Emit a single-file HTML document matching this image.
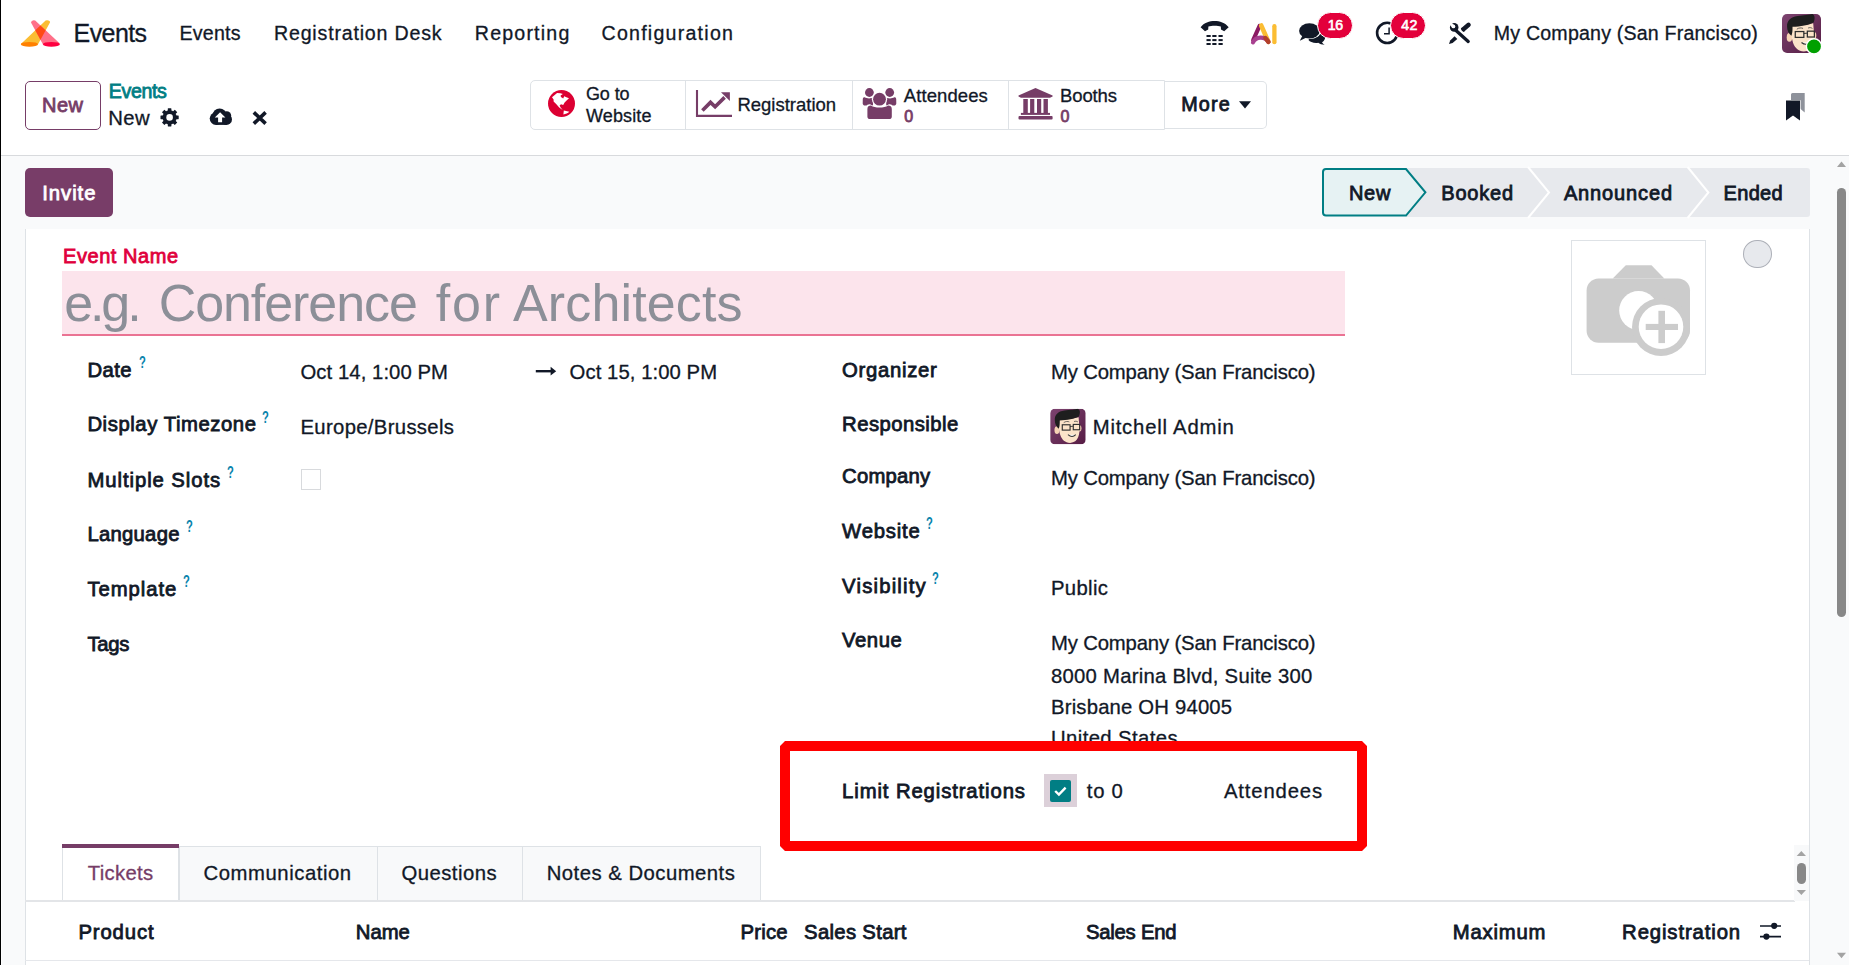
<!DOCTYPE html>
<html><head><meta charset="utf-8"><style>
html,body{margin:0;padding:0;}
body{width:1849px;height:965px;overflow:hidden;position:relative;background:#fff;font-family:"Liberation Sans",sans-serif;color:#111827;}
.t{position:absolute;white-space:nowrap;line-height:1;}
.b{position:absolute;}
svg{position:absolute;overflow:visible;}
</style></head><body>
<div class="b" style="left:0px;top:155px;width:1849px;height:810px;background:#f9fafb;"></div>
<div class="b" style="left:0px;top:155px;width:1849px;height:1px;background:#d8dadd;"></div>
<div class="b" style="left:25px;top:229px;width:1785px;height:736px;background:#fff;border-left:1px solid #dee2e6;border-right:1px solid #dee2e6;box-sizing:border-box;"></div>
<div class="b" style="left:0px;top:0px;width:1px;height:965px;background:#000;"></div>
<div class="b" style="left:1px;top:156px;width:1px;height:809px;background:#fff;"></div>
<svg style="left:0;top:0" width="1849" height="965" viewBox="0 0 1849 965"><path d="M1313,30 C1320,30 1326,34 1325,38.5 C1324.5,40.5 1323,41.8 1322,42.3 C1322.6,43.3 1323.5,44.2 1324.6,44.8 C1322,44.8 1319.6,43.8 1318.2,42.8 C1314,43.5 1310,42 1308.5,40 Z" fill="#111827"/>
<ellipse cx="1309.6" cy="31" rx="11.4" ry="8" fill="#fff"/>
<ellipse cx="1309.4" cy="30.9" rx="10.3" ry="7.7" fill="#111827"/>
<path d="M1302.5,35.5 L1299.8,40.8 L1306.5,37.5 Z" fill="#111827"/>
<circle cx="1387.2" cy="32.9" r="10.1" fill="none" stroke="#111827" stroke-width="2.6"/>
<path d="M1389.1,27.4 L1389.1,33.7 L1384,33.7" fill="none" stroke="#111827" stroke-width="1.5"/>
<path d="M1406,168 L1807,168 Q1810,168 1810,171 L1810,214 Q1810,217 1807,217 L1406,217 Z" fill="#e7e9ed"/>
<path d="M1528,167 L1549,192.5 L1528,218" fill="none" stroke="#fff" stroke-width="2"/>
<path d="M1687.6,167 L1708.4,192.5 L1687.6,218" fill="none" stroke="#fff" stroke-width="2"/>
<path d="M1326,169 L1406,169 L1425.4,192.3 L1406,215.6 L1326,215.6 Q1323,215.6 1323,212.6 L1323,172 Q1323,169 1326,169 Z" fill="#e6f2f3" stroke="#017e84" stroke-width="2" stroke-linejoin="miter"/>
<g fill="#cccccc">
<path d="M1625.8,265.3 L1651.5,265.3 L1664.3,278.4 L1612.7,278.4 Z"/>
<rect x="1586.6" y="278.4" width="103.4" height="64.3" rx="12"/></g>
<circle cx="1638.6" cy="310.5" r="19.4" fill="#fff"/>
<circle cx="1661" cy="327" r="29" fill="#cccccc"/>
<circle cx="1661" cy="326.7" r="22.3" fill="#fff"/>
<rect x="1645.7" y="323.9" width="32.3" height="6.1" fill="#cccccc"/>
<rect x="1658.4" y="310.8" width="6.6" height="32.3" fill="#cccccc"/></svg>
<div class="t" style="left:73.60px;top:20.84px;font-size:25px;-webkit-text-stroke:0.3px currentColor;letter-spacing:-0.595px;">Events</div>
<div class="t" style="left:179.50px;top:23.91px;font-size:19.6px;-webkit-text-stroke:0.3px currentColor;letter-spacing:0.224px;">Events</div>
<div class="t" style="left:274.00px;top:23.91px;font-size:19.6px;-webkit-text-stroke:0.3px currentColor;letter-spacing:0.810px;">Registration Desk</div>
<div class="t" style="left:474.80px;top:23.91px;font-size:19.6px;-webkit-text-stroke:0.3px currentColor;letter-spacing:1.192px;">Reporting</div>
<div class="t" style="left:601.50px;top:23.91px;font-size:19.6px;-webkit-text-stroke:0.3px currentColor;letter-spacing:1.240px;">Configuration</div>
<div class="t" style="left:1493.80px;top:23.71px;font-size:19.6px;-webkit-text-stroke:0.3px currentColor;letter-spacing:0.192px;">My Company (San Francisco)</div>
<div class="b" style="left:1316.6px;top:12.3px;width:36.40000000000009px;height:27.099999999999998px;background:#e3003b;border-radius:14px;border:1px solid #fff;box-sizing:border-box;"></div>
<div class="t" style="left:1327.70px;top:17.98px;font-size:14.2px;-webkit-text-stroke:0.6px currentColor;color:#fff;letter-spacing:-0.362px;">16</div>
<div class="b" style="left:1390.3px;top:12.3px;width:35.700000000000045px;height:27.099999999999998px;background:#e3003b;border-radius:14px;border:1px solid #fff;box-sizing:border-box;"></div>
<div class="t" style="left:1401.30px;top:17.98px;font-size:14.2px;-webkit-text-stroke:0.6px currentColor;color:#fff;letter-spacing:0.238px;">42</div>
<div class="b" style="left:25px;top:81px;width:76px;height:49px;border:1px solid #763d67;border-radius:5px;box-sizing:border-box;"></div>
<div class="t" style="left:41.90px;top:94.57px;font-size:20px;-webkit-text-stroke:0.8px currentColor;color:#763d67;letter-spacing:0.550px;">New</div>
<div class="t" style="left:108.70px;top:82.11px;font-size:19.6px;-webkit-text-stroke:0.8px currentColor;color:#017e84;letter-spacing:-0.336px;">Events</div>
<div class="t" style="left:108.30px;top:107.52px;font-size:20.3px;-webkit-text-stroke:0.3px currentColor;letter-spacing:0.349px;">New</div>
<div class="b" style="left:529.6px;top:80px;width:635.8000000000001px;height:50px;border:1px solid #dee2e6;border-radius:5px 0 0 5px;box-sizing:border-box;"></div>
<div class="b" style="left:1165px;top:81px;width:102px;height:47.80000000000001px;border:1px solid #dee2e6;border-left:none;border-radius:0 5px 5px 0;box-sizing:border-box;"></div>
<div class="b" style="left:685px;top:80px;width:1px;height:50px;background:#dee2e6;"></div>
<div class="b" style="left:852px;top:80px;width:1px;height:50px;background:#dee2e6;"></div>
<div class="b" style="left:1008px;top:80px;width:1px;height:50px;background:#dee2e6;"></div>
<div class="t" style="left:586.00px;top:84.56px;font-size:18px;-webkit-text-stroke:0.3px currentColor;letter-spacing:-0.127px;">Go to</div>
<div class="t" style="left:586.00px;top:107.16px;font-size:18px;-webkit-text-stroke:0.3px currentColor;letter-spacing:0.132px;">Website</div>
<div class="t" style="left:737.40px;top:96.14px;font-size:18.5px;-webkit-text-stroke:0.3px currentColor;">Registration</div>
<div class="t" style="left:903.80px;top:87.04px;font-size:18.5px;-webkit-text-stroke:0.3px currentColor;letter-spacing:0.082px;">Attendees</div>
<div class="t" style="left:904.20px;top:108.76px;font-size:16px;-webkit-text-stroke:0.8px currentColor;color:#763d67;">0</div>
<div class="t" style="left:1060.00px;top:87.04px;font-size:18.5px;-webkit-text-stroke:0.3px currentColor;letter-spacing:-0.125px;">Booths</div>
<div class="t" style="left:1060.40px;top:108.76px;font-size:16px;-webkit-text-stroke:0.8px currentColor;color:#763d67;">0</div>
<div class="t" style="left:1181.20px;top:94.94px;font-size:19.8px;-webkit-text-stroke:0.8px currentColor;letter-spacing:1.185px;">More</div>
<div class="b" style="left:25px;top:168px;width:88px;height:49px;background:#783d68;border-radius:5px;"></div>
<div class="t" style="left:42.30px;top:182.82px;font-size:20.3px;-webkit-text-stroke:0.8px currentColor;color:#fff;letter-spacing:0.937px;">Invite</div>
<div class="t" style="left:1348.90px;top:183.27px;font-size:20px;-webkit-text-stroke:0.8px currentColor;letter-spacing:0.750px;">New</div>
<div class="t" style="left:1441.30px;top:183.27px;font-size:20px;-webkit-text-stroke:0.8px currentColor;letter-spacing:0.800px;">Booked</div>
<div class="t" style="left:1563.90px;top:183.27px;font-size:20px;-webkit-text-stroke:0.8px currentColor;letter-spacing:0.875px;">Announced</div>
<div class="t" style="left:1723.60px;top:183.27px;font-size:20px;-webkit-text-stroke:0.8px currentColor;letter-spacing:0.300px;">Ended</div>
<div class="t" style="left:63.10px;top:245.77px;font-size:20px;-webkit-text-stroke:0.8px currentColor;color:#e0003c;letter-spacing:0.544px;">Event Name</div>
<div class="b" style="left:62px;top:271px;width:1283px;height:65px;background:#fce4ec;border-bottom:2px solid #ea7393;box-sizing:border-box;"></div>
<div class="t" style="left:64.30px;top:276.98px;font-size:52px;color:#8c8f98;letter-spacing:-3.147px;">e.g.</div>
<div class="t" style="left:158.70px;top:276.98px;font-size:52px;color:#8c8f98;letter-spacing:-1.071px;">Conference</div>
<div class="t" style="left:435.70px;top:276.98px;font-size:52px;color:#8c8f98;letter-spacing:1.860px;">for</div>
<div class="t" style="left:513.00px;top:276.98px;font-size:52px;color:#8c8f98;letter-spacing:0.147px;">Architects</div>
<div class="t" style="left:87.40px;top:360.02px;font-size:20.3px;-webkit-text-stroke:0.8px currentColor;letter-spacing:0.456px;">Date</div>
<div class="t" style="left:87.40px;top:414.42px;font-size:20.3px;-webkit-text-stroke:0.8px currentColor;letter-spacing:0.569px;">Display Timezone</div>
<div class="t" style="left:87.40px;top:469.62px;font-size:20.3px;-webkit-text-stroke:0.8px currentColor;letter-spacing:0.940px;">Multiple Slots</div>
<div class="t" style="left:87.40px;top:523.82px;font-size:20.3px;-webkit-text-stroke:0.8px currentColor;letter-spacing:0.266px;">Language</div>
<div class="t" style="left:87.40px;top:578.82px;font-size:20.3px;-webkit-text-stroke:0.8px currentColor;letter-spacing:0.955px;">Template</div>
<div class="t" style="left:87.40px;top:633.82px;font-size:20.3px;-webkit-text-stroke:0.8px currentColor;letter-spacing:-0.244px;">Tags</div>
<div class="t" style="left:300.50px;top:361.62px;font-size:20.3px;-webkit-text-stroke:0.3px currentColor;letter-spacing:0.067px;">Oct 14, 1:00 PM</div>
<div class="t" style="left:569.60px;top:361.62px;font-size:20.3px;-webkit-text-stroke:0.3px currentColor;letter-spacing:0.067px;">Oct 15, 1:00 PM</div>
<div class="t" style="left:300.50px;top:416.82px;font-size:20.3px;-webkit-text-stroke:0.3px currentColor;letter-spacing:0.329px;">Europe/Brussels</div>
<div class="b" style="left:300.5px;top:469px;width:20.5px;height:20.5px;border:1px solid #d8dadd;box-sizing:border-box;background:#fff;"></div>
<div class="t" style="left:842.10px;top:359.52px;font-size:20.3px;-webkit-text-stroke:0.8px currentColor;letter-spacing:0.710px;">Organizer</div>
<div class="t" style="left:842.10px;top:414.42px;font-size:20.3px;-webkit-text-stroke:0.8px currentColor;letter-spacing:0.445px;">Responsible</div>
<div class="t" style="left:842.10px;top:465.82px;font-size:20.3px;-webkit-text-stroke:0.8px currentColor;letter-spacing:0.219px;">Company</div>
<div class="t" style="left:842.10px;top:520.62px;font-size:20.3px;-webkit-text-stroke:0.8px currentColor;letter-spacing:0.804px;">Website</div>
<div class="t" style="left:842.10px;top:575.62px;font-size:20.3px;-webkit-text-stroke:0.8px currentColor;letter-spacing:1.191px;">Visibility</div>
<div class="t" style="left:842.10px;top:630.32px;font-size:20.3px;-webkit-text-stroke:0.8px currentColor;letter-spacing:0.537px;">Venue</div>
<div class="t" style="left:1051.00px;top:361.62px;font-size:20.3px;-webkit-text-stroke:0.3px currentColor;letter-spacing:-0.147px;">My Company (San Francisco)</div>
<div class="t" style="left:1092.70px;top:416.62px;font-size:20.3px;-webkit-text-stroke:0.3px currentColor;letter-spacing:0.797px;">Mitchell Admin</div>
<div class="t" style="left:1051.00px;top:467.52px;font-size:20.3px;-webkit-text-stroke:0.3px currentColor;letter-spacing:-0.147px;">My Company (San Francisco)</div>
<div class="t" style="left:1051.00px;top:577.82px;font-size:20.3px;-webkit-text-stroke:0.3px currentColor;letter-spacing:0.336px;">Public</div>
<div class="t" style="left:1051.00px;top:632.52px;font-size:20.3px;-webkit-text-stroke:0.3px currentColor;letter-spacing:-0.147px;">My Company (San Francisco)</div>
<div class="t" style="left:1051.00px;top:665.72px;font-size:20.3px;-webkit-text-stroke:0.3px currentColor;letter-spacing:0.251px;">8000 Marina Blvd, Suite 300</div>
<div class="t" style="left:1051.00px;top:697.02px;font-size:20.3px;-webkit-text-stroke:0.3px currentColor;letter-spacing:0.185px;">Brisbane OH 94005</div>
<div class="t" style="left:1051.00px;top:728.32px;font-size:20.3px;-webkit-text-stroke:0.3px currentColor;letter-spacing:0.400px;">United States</div>
<div class="t" style="left:138.70px;top:354.31px;font-size:17px;font-weight:bold;color:#0a84ad;transform:scaleX(0.66);transform-origin:0 0;">?</div>
<div class="t" style="left:262.30px;top:409.01px;font-size:17px;font-weight:bold;color:#0a84ad;transform:scaleX(0.66);transform-origin:0 0;">?</div>
<div class="t" style="left:227.30px;top:464.21px;font-size:17px;font-weight:bold;color:#0a84ad;transform:scaleX(0.66);transform-origin:0 0;">?</div>
<div class="t" style="left:185.80px;top:517.91px;font-size:17px;font-weight:bold;color:#0a84ad;transform:scaleX(0.66);transform-origin:0 0;">?</div>
<div class="t" style="left:182.80px;top:572.91px;font-size:17px;font-weight:bold;color:#0a84ad;transform:scaleX(0.66);transform-origin:0 0;">?</div>
<div class="t" style="left:925.80px;top:515.01px;font-size:17px;font-weight:bold;color:#0a84ad;transform:scaleX(0.66);transform-origin:0 0;">?</div>
<div class="t" style="left:931.60px;top:569.81px;font-size:17px;font-weight:bold;color:#0a84ad;transform:scaleX(0.66);transform-origin:0 0;">?</div>
<div class="b" style="left:1571px;top:240px;width:135px;height:135px;border:1px solid #dee2e6;box-sizing:border-box;"></div>
<div class="b" style="left:1743.3px;top:239.6px;width:28.700000000000045px;height:28.900000000000006px;background:#e7e9ed;border:1.5px solid #adb0b8;border-radius:50%;box-sizing:border-box;"></div>
<svg style="left:0;top:0" width="1849" height="965"><path d="M785,746 L1362,746 L1362,846 L785,846 Z" fill="#fff" stroke="#ff0000" stroke-width="10" stroke-linejoin="bevel"/></svg>
<div class="t" style="left:842.10px;top:780.82px;font-size:20.3px;-webkit-text-stroke:0.8px currentColor;letter-spacing:0.891px;">Limit Registrations</div>
<div class="b" style="left:1044px;top:774.4px;width:33px;height:33.10000000000002px;background:#dcd0d9;"></div>
<div class="b" style="left:1050px;top:780.2px;width:21px;height:21.399999999999977px;background:#017e84;border-radius:2px;"></div>
<div class="t" style="left:1086.80px;top:781.32px;font-size:20.3px;-webkit-text-stroke:0.3px currentColor;letter-spacing:0.700px;">to 0</div>
<div class="t" style="left:1224.00px;top:781.32px;font-size:20.3px;-webkit-text-stroke:0.3px currentColor;letter-spacing:0.844px;">Attendees</div>
<div class="b" style="left:178.6px;top:845.5px;width:582.4px;height:55.5px;background:#f8f9fa;border:1px solid #dee2e6;border-bottom:none;box-sizing:border-box;"></div>
<div class="b" style="left:376.5px;top:845.5px;width:1.0px;height:54.5px;background:#dee2e6;"></div>
<div class="b" style="left:521.6px;top:845.5px;width:1.0px;height:54.5px;background:#dee2e6;"></div>
<div class="b" style="left:62px;top:844px;width:117px;height:57px;background:#fff;border-left:1px solid #dee2e6;border-right:1px solid #dee2e6;box-sizing:border-box;"></div>
<div class="b" style="left:62px;top:844px;width:117px;height:4px;background:#763d67;"></div>
<div class="b" style="left:25px;top:900px;width:1770px;height:1.5px;background:#e3e5e8;"></div>
<div class="t" style="left:87.80px;top:863.42px;font-size:20.3px;-webkit-text-stroke:0.3px currentColor;color:#763d67;letter-spacing:0.310px;">Tickets</div>
<div class="t" style="left:203.50px;top:863.42px;font-size:20.3px;-webkit-text-stroke:0.3px currentColor;letter-spacing:0.560px;">Communication</div>
<div class="t" style="left:401.40px;top:863.42px;font-size:20.3px;-webkit-text-stroke:0.3px currentColor;letter-spacing:0.481px;">Questions</div>
<div class="t" style="left:546.70px;top:863.42px;font-size:20.3px;-webkit-text-stroke:0.3px currentColor;letter-spacing:0.489px;">Notes &amp; Documents</div>
<div class="t" style="left:78.40px;top:921.62px;font-size:20.3px;-webkit-text-stroke:0.8px currentColor;letter-spacing:0.878px;">Product</div>
<div class="t" style="left:355.80px;top:921.62px;font-size:20.3px;-webkit-text-stroke:0.8px currentColor;">Name</div>
<div class="t" style="left:740.60px;top:921.62px;font-size:20.3px;-webkit-text-stroke:0.8px currentColor;letter-spacing:0.204px;">Price</div>
<div class="t" style="left:804.10px;top:921.62px;font-size:20.3px;-webkit-text-stroke:0.8px currentColor;letter-spacing:0.313px;">Sales Start</div>
<div class="t" style="left:1086.00px;top:921.62px;font-size:20.3px;-webkit-text-stroke:0.8px currentColor;letter-spacing:-0.246px;">Sales End</div>
<div class="t" style="left:1452.80px;top:921.62px;font-size:20.3px;-webkit-text-stroke:0.8px currentColor;letter-spacing:0.800px;">Maximum</div>
<div class="t" style="left:1622.10px;top:921.62px;font-size:20.3px;-webkit-text-stroke:0.8px currentColor;letter-spacing:0.891px;">Registration</div>
<div class="b" style="left:25px;top:959.5px;width:1784px;height:1.0px;background:#e5e7eb;"></div>
<div class="b" style="left:1837px;top:188px;width:9px;height:429px;background:#888;border-radius:5px;"></div>
<div class="b" style="left:1794px;top:845px;width:15px;height:56px;background:#f8f9fa;"></div>
<div class="b" style="left:1797px;top:863px;width:9px;height:21px;background:#888;border-radius:5px;"></div>
<svg style="left:0;top:0" width="1849" height="965" viewBox="0 0 1849 965"><defs><clipPath id="ycone"><path d="M45.6,20.6 Q47.5,19.6 49.8,21.2 Q50.4,22.2 49.7,23 L37.9,44.4 L20.9,44 Z"/></clipPath></defs>
<path d="M45.6,20.6 Q47.5,19.6 49.8,21.2 Q50.4,22.2 49.7,23 L37.9,44.4 L20.9,44 Z" fill="#fbbd33"/>
<ellipse cx="29.4" cy="44.3" rx="8.6" ry="2.4" fill="#ff8000"/>
<path d="M31,22.4 Q31.2,20.6 33.6,20.2 Q34.6,20.2 35.2,20.6 L59.8,43.6 L43,44.4 Z" fill="#ff7089"/>
<path d="M31,22.4 Q31.2,20.6 33.6,20.2 Q34.6,20.2 35.2,20.6 L59.8,43.6 L43,44.4 Z" fill="#ff4a14" clip-path="url(#ycone)"/>
<ellipse cx="51.4" cy="44.3" rx="8.5" ry="2.4" fill="#ff0040"/>
<path d="M1200.6,27.3 C1204,22.6 1209.5,21 1214.6,21 C1219.7,21 1225.2,22.6 1228.7,27.3 L1224.2,31.2 L1221,29.4 L1220.8,26.4 C1217.8,25.4 1211.4,25.4 1208.4,26.4 L1208.2,29.4 L1205,31.2 Z" fill="#111827"/>
<rect x="1206.5" y="35" width="4.2" height="2" fill="#111827"/>
<rect x="1212.3" y="35" width="4.2" height="2" fill="#111827"/>
<rect x="1218.5" y="35" width="4.2" height="2" fill="#111827"/>
<rect x="1206.5" y="39.1" width="4.2" height="2" fill="#111827"/>
<rect x="1212.3" y="39.1" width="4.2" height="2" fill="#111827"/>
<rect x="1218.5" y="39.1" width="4.2" height="2" fill="#111827"/>
<rect x="1206.5" y="43" width="4.2" height="2" fill="#111827"/>
<rect x="1212.3" y="43" width="4.2" height="2" fill="#111827"/>
<rect x="1218.5" y="43" width="4.2" height="2" fill="#111827"/>
<path d="M1253.2,40 L1259.5,26" stroke="#8b1a62" stroke-width="4.2" stroke-linecap="round"/>
<path d="M1261.2,25.5 L1268.4,41.8" stroke="#fbbd33" stroke-width="4.6" stroke-linecap="round"/>
<path d="M1253,42.4 C1256,36.5 1264.5,36 1268.4,41.8" stroke="#a8408f" stroke-width="4.2" fill="none" stroke-linecap="round"/>
<path d="M1265.4,38 L1268.4,41.8" stroke="#b3402a" stroke-width="4.4" stroke-linecap="round"/>
<path d="M1274.4,26.2 L1274.4,42.2" stroke="#fbbd33" stroke-width="4.3" stroke-linecap="round"/>
<path d="M1456,30.4 L1468.2,41.4" stroke="#111827" stroke-width="3.3" stroke-linecap="round"/>
<circle cx="1454.2" cy="27.4" r="4.3" fill="#111827"/>
<circle cx="1453.4" cy="26.4" r="1.9" fill="#fff"/>
<path d="M1453.4,26.4 L1449.2,22.2" stroke="#fff" stroke-width="2.8"/>
<path d="M1463.4,29.2 L1468.6,24.8" stroke="#111827" stroke-width="4.4" stroke-linecap="round"/>
<path d="M1463.4,29.2 L1462.2,30.2" stroke="#111827" stroke-width="4.4"/>
<path d="M1454.6,36.2 L1457.3,38.9 L1452.6,43 L1449,44 L1450.2,40.6 Z" fill="#111827"/>
<g transform="translate(1782,14) scale(0.39)">
<defs><linearGradient id="agt" x1="0" y1="0" x2="1" y2="1"><stop offset="0" stop-color="#7d4470"/><stop offset="1" stop-color="#561c44"/></linearGradient>
<clipPath id="act"><rect x="0" y="0" width="100" height="100" rx="13"/></clipPath></defs>
<g clip-path="url(#act)">
<rect x="0" y="0" width="100" height="100" fill="url(#agt)"/>
<ellipse cx="19" cy="60" rx="7" ry="11" fill="#f6d2b4"/>
<ellipse cx="83" cy="55" rx="5" ry="9" fill="#f6d2b4"/>
<path d="M25,30 C22,62 28,95 56,96 C80,95 84,72 82,48 L80,24 C62,28 40,32 25,30 Z" fill="#fbe3c9"/>
<path d="M13,32 C12,18 22,7 40,5 C55,3 70,2 78,0 C86,4 84,14 81,22 C70,28 46,33 27,33 C27,42 27,50 24,56 C17,50 13,42 13,32 Z" fill="#1e1e1e"/>
<rect x="34" y="45" width="22" height="15" fill="none" stroke="#2e2e2e" stroke-width="3.2"/>
<rect x="65" y="44" width="18" height="15" fill="none" stroke="#2e2e2e" stroke-width="3.2"/>
<path d="M56,50 L65,49" stroke="#2e2e2e" stroke-width="2.5"/>
<path d="M38,39 C43,35 50,35 54,37" stroke="#3a3a3a" stroke-width="2" fill="none"/>
<path d="M67,36 C71,34 75,35 78,37" stroke="#3a3a3a" stroke-width="2" fill="none"/>
<path d="M50,73 C57,79 66,79 72,73" stroke="#333" stroke-width="3" fill="#fff"/>
</g></g>
<circle cx="1814" cy="46.4" r="7.6" fill="#00a000" stroke="#fff" stroke-width="1.4"/>
<rect x="167.79999999999998" y="108.30000000000001" width="3.6" height="4" rx="0.4" fill="#111827" transform="rotate(0 169.6 117.4)"/><rect x="167.79999999999998" y="108.30000000000001" width="3.6" height="4" rx="0.4" fill="#111827" transform="rotate(45 169.6 117.4)"/><rect x="167.79999999999998" y="108.30000000000001" width="3.6" height="4" rx="0.4" fill="#111827" transform="rotate(90 169.6 117.4)"/><rect x="167.79999999999998" y="108.30000000000001" width="3.6" height="4" rx="0.4" fill="#111827" transform="rotate(135 169.6 117.4)"/><rect x="167.79999999999998" y="108.30000000000001" width="3.6" height="4" rx="0.4" fill="#111827" transform="rotate(180 169.6 117.4)"/><rect x="167.79999999999998" y="108.30000000000001" width="3.6" height="4" rx="0.4" fill="#111827" transform="rotate(225 169.6 117.4)"/><rect x="167.79999999999998" y="108.30000000000001" width="3.6" height="4" rx="0.4" fill="#111827" transform="rotate(270 169.6 117.4)"/><rect x="167.79999999999998" y="108.30000000000001" width="3.6" height="4" rx="0.4" fill="#111827" transform="rotate(315 169.6 117.4)"/><circle cx="169.6" cy="117.4" r="7.1" fill="#111827"/><circle cx="169.6" cy="117.4" r="3.3" fill="#fff"/>
<g fill="#111827"><circle cx="216" cy="118.6" r="6.3"/><circle cx="219.6" cy="115.6" r="7.1"/><circle cx="226.6" cy="115.8" r="4.6"/><circle cx="226.4" cy="119.4" r="5.6"/><rect x="216" y="116" width="10.4" height="8.9"/></g>
<path d="M214.8,117.4 L220.1,112.2 L225.4,117.4 L222.1,117.4 L222.1,122.2 L218.1,122.2 L218.1,117.4 Z" fill="#fff"/>
<path d="M253.8,112.4 L265.6,123.6 M265.6,112.4 L253.8,123.6" stroke="#111827" stroke-width="3.6"/>
<circle cx="561.5" cy="103.5" r="13.5" fill="#dc0032"/>
<path d="M552,97.2 L557.1,93.1 L560.4,93.3 L562.9,94 L560.6,95.6 L560.9,96.9 L563.2,98.4 L564.2,96.2 L566.4,97.2 L569,98.3 L566.6,100.6 L564.6,102.6 L563.2,105 L561,104.3 L559.6,105.6 L560.6,107.6 L562.7,109.9 L559.2,107.4 L556.6,104.6 L553.6,101.6 L553.6,99.6 Z" fill="#fff"/>
<path d="M563.8,110.4 L569.4,111.8 C567.8,113.2 565.6,114.2 563.4,114.4 Z" fill="#fff"/>
<path d="M697,90 L697,115.9 L732,115.9" fill="none" stroke="#763d67" stroke-width="2.1"/>
<path d="M702.4,110.6 L710.5,102.4 L715.1,106.8 L724.6,97.4" fill="none" stroke="#763d67" stroke-width="3.6" stroke-linejoin="miter"/>
<path d="M721,92.3 L729.9,92.3 L729.9,101.1 Z" fill="#763d67"/>
<g fill="#763d67">
<circle cx="869.4" cy="92.5" r="4.4"/><circle cx="889.7" cy="92.5" r="4.4"/>
<path d="M862.8,99 C863,97.5 864.2,97 865,97.6 C866.5,98.6 871,98.6 873,97.8 L873,105.6 L865,105.6 C863.8,105.6 862.7,104.6 862.7,103.4 Z"/>
<path d="M896.2,99 C896,97.5 894.8,97 894,97.6 C892.5,98.6 888,98.6 886.2,97.8 L886.2,105.6 L894,105.6 C895.2,105.6 896.3,104.6 896.3,103.4 Z"/>
</g>
<circle cx="879.5" cy="99.2" r="7.6" fill="#fff"/>
<path d="M866.2,108 C866.2,104.6 868.6,104.2 870.5,104.4 C874,107.6 885,107.6 888.5,104.4 C890.4,104.2 893,104.6 893,108 L893,117 C893,119 891.4,120.4 889.6,120.4 L869.6,120.4 C867.8,120.4 866.2,119 866.2,117 Z" fill="#fff"/>
<g fill="#763d67"><circle cx="879.5" cy="99.2" r="6.4"/>
<path d="M867.4,109 C867.4,106 869.3,105.3 871,105.4 C874.6,108.2 884.4,108.2 888,105.4 C889.7,105.3 891.8,106 891.8,109 L891.8,116.8 C891.8,118.2 890.6,119.1 889.4,119.1 L869.8,119.1 C868.6,119.1 867.4,118.2 867.4,116.8 Z"/></g>
<g fill="#763d67">
<path d="M1035.5,87.9 L1052.6,95.4 L1052.6,96.4 L1050,97.8 L1021,97.8 L1018.5,96.4 L1018.5,95.4 Z"/>
<rect x="1023.3" y="99" width="4.5" height="14.2"/><rect x="1030.1" y="99" width="4.2" height="14.2"/>
<rect x="1037" y="99" width="4.2" height="14.2"/><rect x="1043.5" y="99" width="4.4" height="14.2"/>
<rect x="1020.9" y="112.9" width="29.1" height="2"/>
<rect x="1018.5" y="116.1" width="34.1" height="3.3" rx="1"/></g>
<path d="M1239,101.2 L1251,101.2 L1245,108.6 Z" fill="#111827"/>
<path d="M1792.5,93 L1804.7,93 L1804.7,112.6 L1800,108.5 L1800,100 L1791,100 L1791,94.5 Q1791,93 1792.5,93 Z" fill="#8e929b"/>
<path d="M1786,100.6 L1800,100.6 L1800,120.4 L1793,115.6 L1786,120.4 Z" fill="#111827" stroke="#fff" stroke-width="1.2" stroke-linejoin="round"/>
<path d="M1786,100.6 L1800,100.6 L1800,120.4 L1793,115.6 L1786,120.4 Z" fill="#111827"/>
<path d="M535.8,371.2 L553,371.2" stroke="#111827" stroke-width="2.4"/><path d="M550.6,366.8 L556.2,371.2 L550.6,375.6 Z" fill="#111827"/>
<g transform="translate(1050.2,408.8) scale(0.355)">
<defs><linearGradient id="ags" x1="0" y1="0" x2="1" y2="1"><stop offset="0" stop-color="#7d4470"/><stop offset="1" stop-color="#561c44"/></linearGradient>
<clipPath id="acs"><rect x="0" y="0" width="100" height="100" rx="13"/></clipPath></defs>
<g clip-path="url(#acs)">
<rect x="0" y="0" width="100" height="100" fill="url(#ags)"/>
<ellipse cx="19" cy="60" rx="7" ry="11" fill="#f6d2b4"/>
<ellipse cx="83" cy="55" rx="5" ry="9" fill="#f6d2b4"/>
<path d="M25,30 C22,62 28,95 56,96 C80,95 84,72 82,48 L80,24 C62,28 40,32 25,30 Z" fill="#fbe3c9"/>
<path d="M13,32 C12,18 22,7 40,5 C55,3 70,2 78,0 C86,4 84,14 81,22 C70,28 46,33 27,33 C27,42 27,50 24,56 C17,50 13,42 13,32 Z" fill="#1e1e1e"/>
<rect x="34" y="45" width="22" height="15" fill="none" stroke="#2e2e2e" stroke-width="3.2"/>
<rect x="65" y="44" width="18" height="15" fill="none" stroke="#2e2e2e" stroke-width="3.2"/>
<path d="M56,50 L65,49" stroke="#2e2e2e" stroke-width="2.5"/>
<path d="M38,39 C43,35 50,35 54,37" stroke="#3a3a3a" stroke-width="2" fill="none"/>
<path d="M67,36 C71,34 75,35 78,37" stroke="#3a3a3a" stroke-width="2" fill="none"/>
<path d="M50,73 C57,79 66,79 72,73" stroke="#333" stroke-width="3" fill="#fff"/>
</g></g>
<path d="M1055.2,791 L1058.9,794.6 L1065.6,787.6" fill="none" stroke="#fff" stroke-width="2.4"/>
<path d="M1760,926 L1781,926 M1760,936.6 L1781,936.6" stroke="#111827" stroke-width="1.6"/>
<circle cx="1774.2" cy="925.8" r="3.1" fill="#111827"/><circle cx="1766.4" cy="936.6" r="3.1" fill="#111827"/>
<path d="M1837,167 L1846,167 L1841.5,161.6 Z" fill="#a3a3a3"/>
<path d="M1837,952.8 L1846,952.8 L1841.5,958.2 Z" fill="#a3a3a3"/>
<path d="M1796.7,856 L1806,856 L1801.35,851 Z" fill="#a3a3a3"/>
<path d="M1796.7,890 L1806,890 L1801.35,895 Z" fill="#a3a3a3"/></svg>
</body></html>
